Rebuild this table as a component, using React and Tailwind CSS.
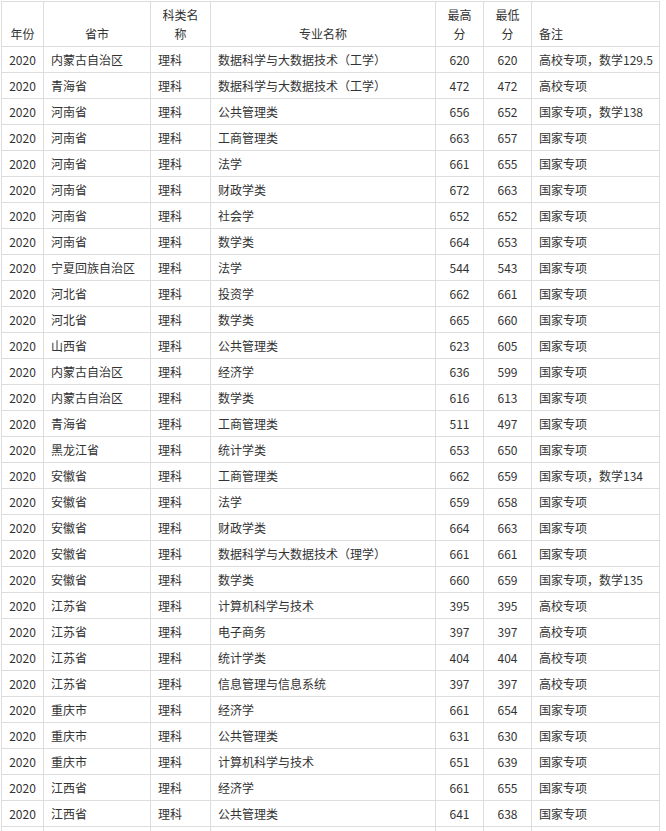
import React from 'react';

const rows = [
  ['内蒙古自治区', '数据科学与大数据技术（工学）', '620', '620', '高校专项，数学129.5'],
  ['青海省', '数据科学与大数据技术（工学）', '472', '472', '高校专项'],
  ['河南省', '公共管理类', '656', '652', '国家专项，数学138'],
  ['河南省', '工商管理类', '663', '657', '国家专项'],
  ['河南省', '法学', '661', '655', '国家专项'],
  ['河南省', '财政学类', '672', '663', '国家专项'],
  ['河南省', '社会学', '652', '652', '国家专项'],
  ['河南省', '数学类', '664', '653', '国家专项'],
  ['宁夏回族自治区', '法学', '544', '543', '国家专项'],
  ['河北省', '投资学', '662', '661', '国家专项'],
  ['河北省', '数学类', '665', '660', '国家专项'],
  ['山西省', '公共管理类', '623', '605', '国家专项'],
  ['内蒙古自治区', '经济学', '636', '599', '国家专项'],
  ['内蒙古自治区', '数学类', '616', '613', '国家专项'],
  ['青海省', '工商管理类', '511', '497', '国家专项'],
  ['黑龙江省', '统计学类', '653', '650', '国家专项'],
  ['安徽省', '工商管理类', '662', '659', '国家专项，数学134'],
  ['安徽省', '法学', '659', '658', '国家专项'],
  ['安徽省', '财政学类', '664', '663', '国家专项'],
  ['安徽省', '数据科学与大数据技术（理学）', '661', '661', '国家专项'],
  ['安徽省', '数学类', '660', '659', '国家专项，数学135'],
  ['江苏省', '计算机科学与技术', '395', '395', '高校专项'],
  ['江苏省', '电子商务', '397', '397', '高校专项'],
  ['江苏省', '统计学类', '404', '404', '高校专项'],
  ['江苏省', '信息管理与信息系统', '397', '397', '高校专项'],
  ['重庆市', '经济学', '661', '654', '国家专项'],
  ['重庆市', '公共管理类', '631', '630', '国家专项'],
  ['重庆市', '计算机科学与技术', '651', '639', '国家专项'],
  ['江西省', '经济学', '661', '655', '国家专项'],
  ['江西省', '公共管理类', '641', '638', '国家专项'],
];

const cell = 'border-r border-b border-[#dddddd] h-[26px] flex items-center whitespace-nowrap overflow-hidden';
const head = 'border-r border-b border-[#dddddd] h-[45px] flex items-end pb-[3px] leading-[19px]';

const App = () => {
  return (
    <div
      className="bg-white p-px text-[12px] text-[#333333]"
      style={{ fontFamily: '"Noto Sans CJK SC", "Noto Sans", sans-serif' }}
    >
      <div className="grid grid-cols-[42px_107px_60px_225px_48px_48px_128px] w-[659px] border-l border-t border-[#dddddd]">
        {/* Header */}
        <div className={`${head} justify-center`}>年份</div>
        <div className={`${head} justify-center`}>省市</div>
        <div className={`${head} justify-center text-center`}>科类名<br />称</div>
        <div className={`${head} justify-center`}>专业名称</div>
        <div className={`${head} justify-center text-center`}>最高<br />分</div>
        <div className={`${head} justify-center text-center`}>最低<br />分</div>
        <div className={`${head} pl-[7px]`}>备注</div>

        {/* Rows */}
        {rows.map((r, i) => (
          <React.Fragment key={i}>
            <div className={`${cell} justify-center`}>2020</div>
            <div className={`${cell} pl-[7px]`}>{r[0]}</div>
            <div className={`${cell} pl-[7px]`}>理科</div>
            <div className={`${cell} pl-[7px]`}>{r[1]}</div>
            <div className={`${cell} justify-center`}>{r[2]}</div>
            <div className={`${cell} justify-center`}>{r[3]}</div>
            <div className={`${cell} pl-[7px]`}>{r[4]}</div>
          </React.Fragment>
        ))}

        {/* next row, cut off by the window */}
        {Array.from({ length: 7 }).map((_, i) => (
          <div key={`tail-${i}`} className={cell} />
        ))}
      </div>
    </div>
  );
};

export default App;
